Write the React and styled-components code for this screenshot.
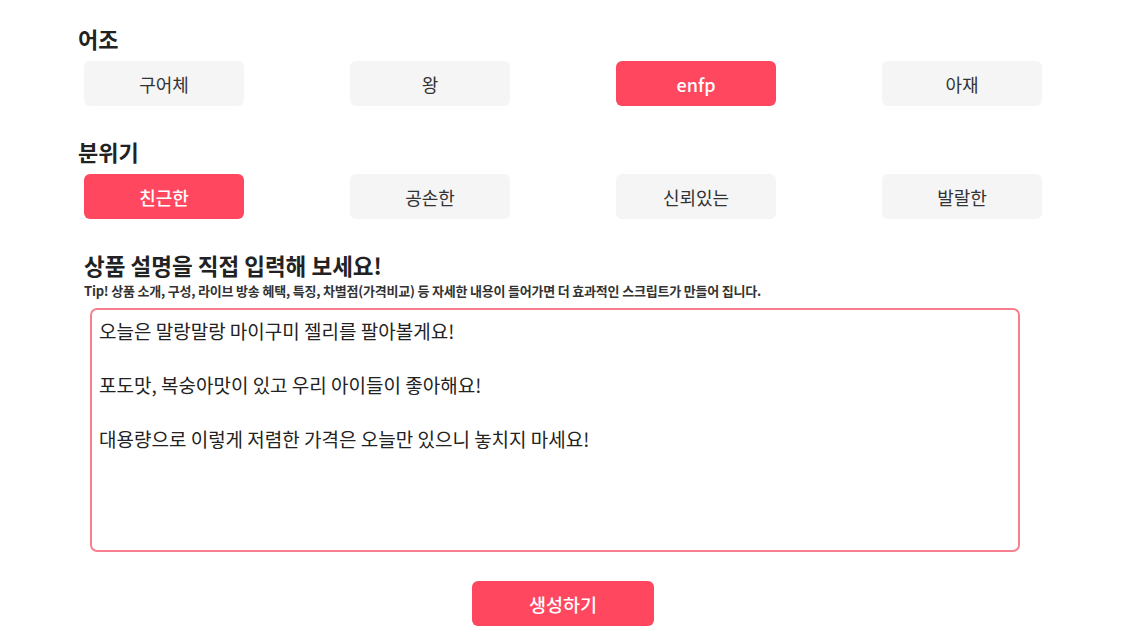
import React, { useState } from 'react';
import styled, { createGlobalStyle } from 'styled-components';

const Global = createGlobalStyle`
  html, body {
    margin: 0;
    padding: 0;
    background: #fff;
  }
  body {
    font-family: "Noto Sans CJK KR", "Noto Sans", sans-serif;
    color: #222;
  }
`;

const accent = '#ff4760';

const Page = styled.div`
  width: 1138px;
  height: 638px;
  box-sizing: border-box;
  padding: 23px 0 0 78px;
  overflow: hidden;
`;

const Heading = styled.h3`
  margin: 0;
  font-size: 22px;
  line-height: 30px;
  font-weight: 700;
  color: #222;
`;

const Options = styled.div`
  display: grid;
  grid-template-columns: repeat(4, 160px);
  justify-content: space-between;
  width: 958px;
  margin: 8px 0 0 6px;
`;

const Section = styled.div`
  & + & {
    margin-top: 30px;
  }
`;

const Option = styled.button`
  height: 45px;
  border: 0;
  border-radius: 6px;
  background: ${p => (p.$active ? accent : '#f5f5f5')};
  color: ${p => (p.$active ? '#fff' : '#333')};
  font-family: inherit;
  font-size: 18px;
  font-weight: ${p => (p.$active ? 500 : 400)};
  cursor: pointer;
`;

const Describe = styled.div`
  margin: 32px 0 0 6px;
`;

const Title = styled.h2`
  margin: 0;
  font-size: 22.5px;
  line-height: 28px;
  font-weight: 700;
  color: #222;
`;

const Tip = styled.p`
  margin: 4px 0 0;
  font-size: 13px;
  line-height: 16px;
  font-weight: 700;
  color: #333;
  letter-spacing: -0.2px;
`;

const Input = styled.textarea`
  display: block;
  box-sizing: border-box;
  width: 930px;
  height: 244px;
  margin: 9px 0 0 12px;
  padding: 7px 7px 4px;
  border: 2px solid #f6808f;
  border-radius: 7px;
  resize: none;
  outline: none;
  font-family: inherit;
  font-size: 19px;
  line-height: 27px;
  color: #222;
`;

const Footer = styled.div`
  display: flex;
  margin: 29px 0 0 394px;
`;

const Submit = styled.button`
  width: 182px;
  height: 45px;
  border: 0;
  border-radius: 6px;
  background: ${accent};
  color: #fff;
  font-family: inherit;
  font-size: 18.5px;
  font-weight: 500;
  cursor: pointer;
`;

const tones = ['구어체', '왕', 'enfp', '아재'];
const moods = ['친근한', '공손한', '신뢰있는', '발랄한'];

const initial = `오늘은 말랑말랑 마이구미 젤리를 팔아볼게요!

포도맛, 복숭아맛이 있고 우리 아이들이 좋아해요!

대용량으로 이렇게 저렴한 가격은 오늘만 있으니 놓치지 마세요!`;

export default function App() {
  const [tone, setTone] = useState('enfp');
  const [mood, setMood] = useState('친근한');
  const [text, setText] = useState(initial);

  return (
    <Page>
      <Global />
      <Section>
        <Heading>어조</Heading>
        <Options>
          {tones.map(t => (
            <Option key={t} $active={t === tone} onClick={() => setTone(t)}>{t}</Option>
          ))}
        </Options>
      </Section>
      <Section>
        <Heading>분위기</Heading>
        <Options>
          {moods.map(m => (
            <Option key={m} $active={m === mood} onClick={() => setMood(m)}>{m}</Option>
          ))}
        </Options>
      </Section>
      <Describe>
        <Title>상품 설명을 직접 입력해 보세요!</Title>
        <Tip>Tip! 상품 소개, 구성, 라이브 방송 혜택, 특징, 차별점(가격비교) 등 자세한 내용이 들어가면 더 효과적인 스크립트가 만들어 집니다.</Tip>
      </Describe>
      <Input value={text} onChange={e => setText(e.target.value)} />
      <Footer>
        <Submit>생성하기</Submit>
      </Footer>
    </Page>
  );
}
